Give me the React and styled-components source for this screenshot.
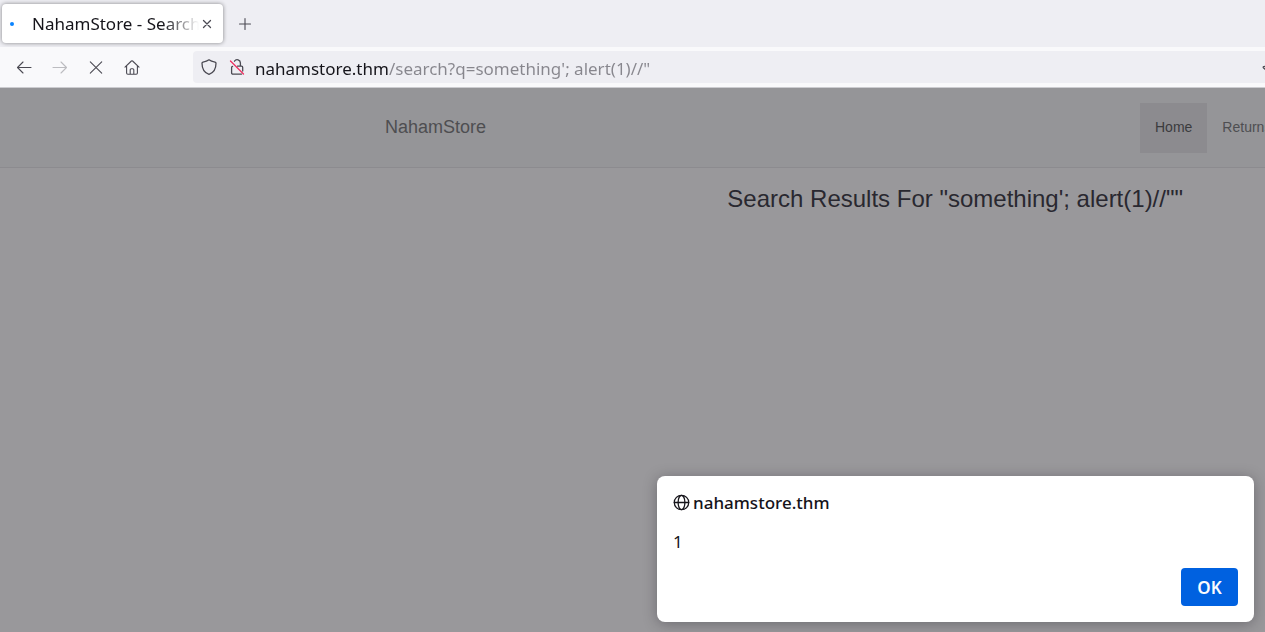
import React from "react";
import styled, { createGlobalStyle } from "styled-components";

const Global = createGlobalStyle`
  * { box-sizing: border-box; }
  body { margin: 0; background: #99989b; }
  button { font: inherit; color: inherit; border: 0; padding: 0; background: none; }
`;

const Browser = styled.div`
  min-height: 100vh;
  display: flex;
  flex-direction: column;
  overflow: hidden;
  position: relative;
  font-family: "Noto Sans", sans-serif;
  color: #15141a;
`;

const TabStrip = styled.div`
  display: flex;
  align-items: center;
  height: 47px;
  padding: 0 2px;
  background: #eeeef3;
`;

const Tab = styled.div`
  display: flex;
  align-items: center;
  width: 221px;
  height: 39px;
  padding: 0 8px;
  border-radius: 4px;
  background: #fff;
  box-shadow: 0 0 4px rgba(0, 0, 0, 0.45);
`;

const LoadingDot = styled.span`
  width: 4px;
  height: 4px;
  border-radius: 50%;
  background: #0a84ff;
  flex: none;
`;

const TabTitle = styled.span`
  flex: 1;
  margin-left: 18px;
  overflow: hidden;
  white-space: nowrap;
  font-size: 17px;
  line-height: 24px;
  mask-image: linear-gradient(to left, transparent, #000 36px);
`;

const IconButton = styled.button`
  display: flex;
  align-items: center;
  justify-content: center;
  flex: none;
  width: ${(p) => p.$width || 36}px;
  height: 32px;
  color: ${(p) => (p.$dim ? "#bcbcc0" : "#4b4a53")};
`;

const Toolbar = styled.div`
  display: flex;
  align-items: center;
  height: 41px;
  padding-left: 6px;
  background: #f9f9fb;
  border-bottom: 1px solid #ccccd0;
`;

const AddressBar = styled.div`
  display: flex;
  flex: 1;
  align-items: center;
  height: 32px;
  margin-left: 43px;
  padding-left: 2px;
  border-radius: 4px 0 0 4px;
  background: #eeeef3;
  overflow: hidden;
`;

const Address = styled.input`
  flex: 1;
  min-width: 0;
  height: 32px;
  margin-left: 4px;
  padding: 2px 0 0;
  border: 0;
  outline: 0;
  font: 17px/24px "Noto Sans", sans-serif;
  color: transparent;
  background: linear-gradient(to right, #15141a 134px, #87868d 134px);
  background-clip: text;
`;

const BookmarkEdge = styled.svg`
  flex: none;
  margin-right: -13px;
`;

const SiteNav = styled.header`
  display: flex;
  align-items: center;
  justify-content: space-between;
  height: 80px;
  padding-left: 385px;
  background: #959598;
  border-bottom: 1px solid #8c8b8f;
  font-family: "Liberation Sans", sans-serif;
`;

const Brand = styled.a`
  padding-bottom: 2px;
  font-size: 18px;
  line-height: 20px;
  color: #4e4e51;
  text-decoration: none;
`;

const Links = styled.nav`
  display: flex;
  width: 125px;
`;

const NavLink = styled.a`
  flex: none;
  padding: 14px 15px 16px;
  font-size: 14px;
  line-height: 20px;
  text-decoration: none;
  color: ${(p) => (p.$active ? "#3b3b3e" : "#4e4e51")};
  background: ${(p) => (p.$active ? "#8c8b8f" : "transparent")};
`;

const Results = styled.main`
  flex: 1;
  padding: 18px 82px 0 0;
  text-align: right;
  font-family: "Liberation Sans", sans-serif;
`;

const Heading = styled.h1`
  margin: 0;
  font-size: 24px;
  line-height: 26px;
  font-weight: 400;
  color: #292830;
`;

const Dialog = styled.section`
  position: absolute;
  right: 11px;
  bottom: 10px;
  width: 597px;
  max-width: calc(100% - 22px);
  padding: 15px 16px 16px;
  border-radius: 8px;
  background: #fff;
  box-shadow: 0 2px 14px rgba(28, 27, 34, 0.35);
  font-size: 17px;
  line-height: 23px;
`;

const Origin = styled.h2`
  display: flex;
  align-items: center;
  gap: 3px;
  margin: 0;
  font-size: 17px;
  line-height: 23px;
  font-weight: 500;
`;

const Message = styled.p`
  margin: 16px 0 15px;
`;

const Actions = styled.div`
  display: flex;
  justify-content: flex-end;
`;

const OkButton = styled.button`
  width: 57px;
  height: 38px;
  border-radius: 4px;
  background: #0061e0;
  && { color: #fbfbfe; }
  font-weight: 600;
`;

const Icon = ({ size = 16, width = 1.1, children }) => (
  <svg width={size} height={size} viewBox="0 0 16 16" fill="none" stroke="currentColor"
    strokeWidth={width} strokeLinecap="round" strokeLinejoin="round" aria-hidden="true">
    {children}
  </svg>
);

export default function App() {
  return (
    <>
      <Global />
      <Browser>
        <TabStrip>
          <Tab>
            <LoadingDot />
            <TabTitle>NahamStore - Search</TabTitle>
            <IconButton $width={16} aria-label="Close tab">
              <Icon width={1.3}><path d="M4.500 4.500l7 7M11.500 4.500l-7 7" /></Icon>
            </IconButton>
          </Tab>
          <IconButton $width={43} aria-label="New tab">
            <Icon><path d="M8 2.5v11M2.5 8h11" /></Icon>
          </IconButton>
        </TabStrip>
        <Toolbar>
          <IconButton aria-label="Back">
            <Icon><path d="M15 8.500H1.500M7 3L1.500 8.500L7 14" /></Icon>
          </IconButton>
          <IconButton $dim aria-label="Forward">
            <Icon><path d="M1 8.500h13.500M9 3L14.500 8.500L9 14" /></Icon>
          </IconButton>
          <IconButton aria-label="Stop">
            <Icon><path d="M2.300 2.800l11.400 11.400M13.700 2.800L2.300 14.200" /></Icon>
          </IconButton>
          <IconButton aria-label="Home">
            <Icon>
              <path d="M1 8.200L7.400 2a.9.9 0 0 1 1.200 0L15 8.200M2.600 7V14a1.200 1.200 0 0 0 1.200 1.200H12.200a1.200 1.200 0 0 0 1.200-1.200V7M6.200 14.900V10.700a1 1 0 0 1 1-1h1.600a1 1 0 0 1 1 1v4.200" />
            </Icon>
          </IconButton>
          <AddressBar>
            <IconButton $width={28} aria-label="Tracking protection">
              <Icon width={1.300}>
                <path d="M8 .8C9.500 2 12 2.800 14 3.100C14.700 3.200 15 3.600 15 4.200C15 10 12.500 13.800 8 15.300C3.500 13.800 1 10 1 4.200C1 3.600 1.300 3.200 2 3.100C4 2.800 6.500 2 8 .8Z" />
              </Icon>
            </IconButton>
            <IconButton $width={28} aria-label="Connection not secure">
              <Icon width={1.300}>
                <path d="M5.500 2.200A3.200 3.200 0 0 1 11.400 4V7.200M8.500 7.200H12.500a1.200 1.200 0 0 1 1.200 1.200V12M3.600 7.300A1.200 1.200 0 0 0 2.600 8.500V13.900a1.200 1.200 0 0 0 1.200 1.200H12.600" />
                <path d="M1.500 2L14.500 15" stroke="#ef2f60" />
              </Icon>
            </IconButton>
            <Address aria-label="Address" readOnly value={`nahamstore.thm/search?q=something'; alert(1)//"`} />
            <BookmarkEdge width="16" height="16" viewBox="0 0 16 16" fill="none" stroke="#4b4a53" strokeWidth="1.2" aria-hidden="true">
              <path d="M8 2.500l2 4.500 4.200.7a.6.6 0 0 1 .3 1L11.400 11.500l.8 4.300L8 14l-4.200 1.800.8-4.300L1.300 8.700a.6.6 0 0 1 .3-1L6 7z" />
            </BookmarkEdge>
          </AddressBar>
        </Toolbar>
        <SiteNav>
          <Brand href="#">NahamStore</Brand>
          <Links>
            <NavLink $active href="#">Home</NavLink>
            <NavLink href="#">Returns</NavLink>
          </Links>
        </SiteNav>
        <Results>
          <Heading>Search Results For "something'; alert(1)//""</Heading>
        </Results>
        <Dialog role="alertdialog" aria-labelledby="origin" aria-describedby="message">
          <Origin id="origin">
            <Icon size={17} width={1.200}>
              <circle cx="8" cy="8" r="6.800" />
              <ellipse cx="8" cy="8" rx="3.200" ry="6.800" />
              <path d="M1.200 8h13.600" />
            </Icon>
            nahamstore.thm
          </Origin>
          <Message id="message">1</Message>
          <Actions><OkButton>OK</OkButton></Actions>
        </Dialog>
      </Browser>
    </>
  );
}
